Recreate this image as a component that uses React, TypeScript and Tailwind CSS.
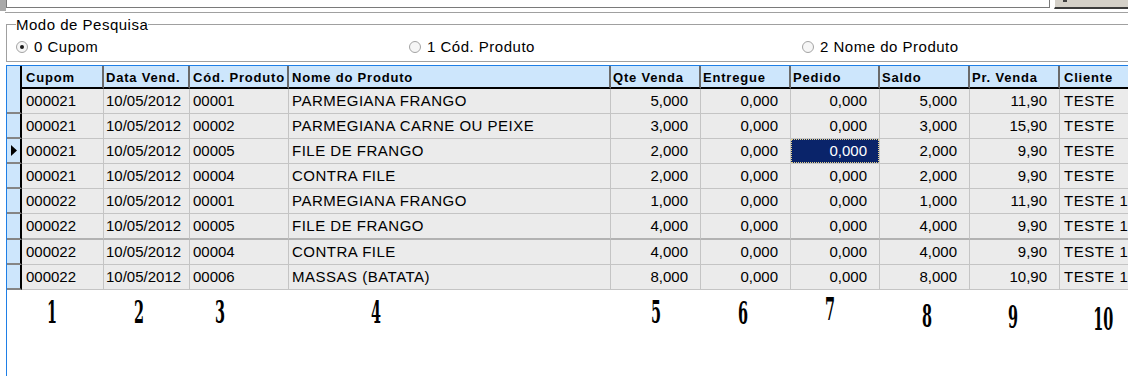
import React from 'react';

type Col = { label: string; w: string; right?: boolean; pl: string };

const COLS: Col[] = [
  { label: 'Cupom', w: 'w-[82px]', pl: 'pl-[4px]' },
  { label: 'Data Vend.', w: 'w-[86px]', pl: 'pl-[2px]' },
  { label: 'Cód. Produto', w: 'w-[99px]', pl: 'pl-[3px]' },
  { label: 'Nome do Produto', w: 'w-[322px]', pl: 'pl-[3px]' },
  { label: 'Qte Venda', w: 'w-[90px]', right: true, pl: 'pl-[2px]' },
  { label: 'Entregue', w: 'w-[90px]', right: true, pl: 'pl-[2px]' },
  { label: 'Pedido', w: 'w-[89px]', right: true, pl: 'pl-[2px]' },
  { label: 'Saldo', w: 'w-[90px]', right: true, pl: 'pl-[2px]' },
  { label: 'Pr. Venda', w: 'w-[90px]', right: true, pl: 'pl-[2px]' },
  { label: 'Cliente', w: 'w-[130px]', pl: 'pl-[4px]' },
];

const ROWS: string[][] = [
  ['000021', '10/05/2012', '00001', 'PARMEGIANA FRANGO', '5,000', '0,000', '0,000', '5,000', '11,90', 'TESTE'],
  ['000021', '10/05/2012', '00002', 'PARMEGIANA CARNE OU PEIXE', '3,000', '0,000', '0,000', '3,000', '15,90', 'TESTE'],
  ['000021', '10/05/2012', '00005', 'FILE DE FRANGO', '2,000', '0,000', '0,000', '2,000', '9,90', 'TESTE'],
  ['000021', '10/05/2012', '00004', 'CONTRA FILE', '2,000', '0,000', '0,000', '2,000', '9,90', 'TESTE'],
  ['000022', '10/05/2012', '00001', 'PARMEGIANA FRANGO', '1,000', '0,000', '0,000', '1,000', '11,90', 'TESTE 1'],
  ['000022', '10/05/2012', '00005', 'FILE DE FRANGO', '4,000', '0,000', '0,000', '4,000', '9,90', 'TESTE 1'],
  ['000022', '10/05/2012', '00004', 'CONTRA FILE', '4,000', '0,000', '0,000', '4,000', '9,90', 'TESTE 1'],
  ['000022', '10/05/2012', '00006', 'MASSAS (BATATA)', '8,000', '0,000', '0,000', '8,000', '10,90', 'TESTE 1'],
];

// annotation digits under the grid (left margin, top margin)
const MARKS: { n: string; ml: string; mt: string }[] = [
  { n: '1', ml: 'ml-[30px]', mt: 'mt-[6px]' },
  { n: '2', ml: 'ml-[57px]', mt: 'mt-[6px]' },
  { n: '3', ml: 'ml-[51px]', mt: 'mt-[6px]' },
  { n: '4', ml: 'ml-[126px]', mt: 'mt-[6px]' },
  { n: '5', ml: 'ml-[250px]', mt: 'mt-[6px]' },
  { n: '6', ml: 'ml-[57px]', mt: 'mt-[7px]' },
  { n: '7', ml: 'ml-[57px]', mt: 'mt-[3px]' },
  { n: '8', ml: 'ml-[67px]', mt: 'mt-[10px]' },
  { n: '9', ml: 'ml-[56px]', mt: 'mt-[11px]' },
  { n: '10', ml: 'ml-[57px]', mt: 'mt-[13px]' },
];

function Radio({ checked, label }: { checked?: boolean; label: string }) {
  return (
    <div className="w-[393px] flex items-center shrink-0">
      <svg width="12" height="12" viewBox="0 0 12 12">
        <circle cx="6" cy="6" r="5.5" fill="#f6f6f6" stroke="#a3a3a3" />
        {checked && <circle cx="6" cy="6" r="2" fill="#1b1b1b" />}
      </svg>
      <span className="ml-[6px]">{label}</span>
    </div>
  );
}

export default function App() {
  return (
    <div className="w-[1128px] h-[376px] bg-white overflow-hidden flex flex-col font-['Liberation_Sans',Arial,sans-serif] text-[15px] text-black">
      {/* top edit strip */}
      <div className="flex h-[12px] shrink-0">
        <div className="w-[6px] h-[11px] bg-[#a9a9a9]" />
        <div className="w-[1044px] h-[8px] bg-white border-l border-r border-b border-[#7a7a7a]" />
        <div className="ml-[4px] flex-1 h-[9px] bg-[#d4d0c8] border-l border-l-white border-b-2 border-b-[#3c3c3c] pl-[8px]">
          <div className="w-[4px] h-[2px] bg-[#404040]" />
        </div>
      </div>
      <div className="ml-[5px] h-[2px] border-t border-[#a0a0a0] shrink-0" />

      {/* group box */}
      <fieldset className="ml-[6px] mt-[3px] h-[45px] border border-r-0 border-[#a0a0a0] shrink-0">
        <legend className="ml-[9px] leading-[15px] tracking-[0.5px]">Modo de Pesquisa</legend>
        <div className="flex mt-[6px] pl-[9px] h-[18px] items-center tracking-[0.5px]">
          <Radio checked label="0 Cupom" />
          <Radio label="1 Cód. Produto" />
          <Radio label="2 Nome do Produto" />
        </div>
      </fieldset>

      {/* grid */}
      <div className="ml-[6px] mt-[3px] flex-1 border-l border-t border-[#1f7fe6] flex flex-col">
        <div className="flex h-[23px] shrink-0">
          <div className="w-[15px] h-full bg-[#cde6fc] border-r-2 border-black shrink-0" />
          {COLS.map(c => (
            <div
              key={c.label}
              className={`${c.w} ${c.pl} shrink-0 h-full bg-[#cde6fc] border-b-2 border-b-black border-r-2 border-r-[#6a6a6a] pt-[3px] flex items-center text-[13px] font-bold tracking-[0.8px] whitespace-nowrap`}
            >
              {c.label}
            </div>
          ))}
        </div>

        {ROWS.map((r, i) => {
          const thick = i === 5;
          return (
            <div key={i} className={`flex shrink-0 ${thick ? 'h-[26px]' : 'h-[25px]'}`}>
              <div className="w-[15px] h-full bg-[#cde6fc] border-r-2 border-r-black border-b-2 border-b-[#858585] flex items-center justify-center shrink-0">
                {i === 2 && (
                  <svg width="6" height="11" viewBox="0 0 6 11">
                    <path d="M0 0 L6 5.5 L0 11Z" fill="#000" />
                  </svg>
                )}
              </div>
              {COLS.map((c, j) => {
                const selected = i === 2 && j === 6;
                const txt = c.right ? 'justify-end pr-[12px]' : `${c.pl}`;
                const track = j === 3 || j === 9 ? 'tracking-[0.5px]' : '';
                return (
                  <div
                    key={j}
                    className={`${c.w} shrink-0 h-full bg-[#ebebeb] border-r border-r-[#c4c4c4] ${thick ? 'border-b-2 border-b-[#b2b2b2]' : 'border-b border-b-[#c4c4c4]'} whitespace-nowrap`}
                  >
                    {selected ? (
                      <div className="h-full w-full bg-[#0a246a] border border-dotted border-[#e6d38a] text-white flex items-center justify-end pr-[11px]">
                        {r[j]}
                      </div>
                    ) : (
                      <div className={`h-full flex items-center ${txt} ${track}`}>{r[j]}</div>
                    )}
                  </div>
                );
              })}
            </div>
          );
        })}

        {/* column numbers */}
        <div className="flex items-start shrink-0">
          {MARKS.map(m => (
            <div
              key={m.n}
              className={`${m.ml} ${m.mt} w-[30px] shrink-0 text-center font-['DejaVu_Serif',serif] font-bold text-[32px] leading-none scale-x-[0.45]`}
            >
              {m.n}
            </div>
          ))}
        </div>
      </div>
    </div>
  );
}
